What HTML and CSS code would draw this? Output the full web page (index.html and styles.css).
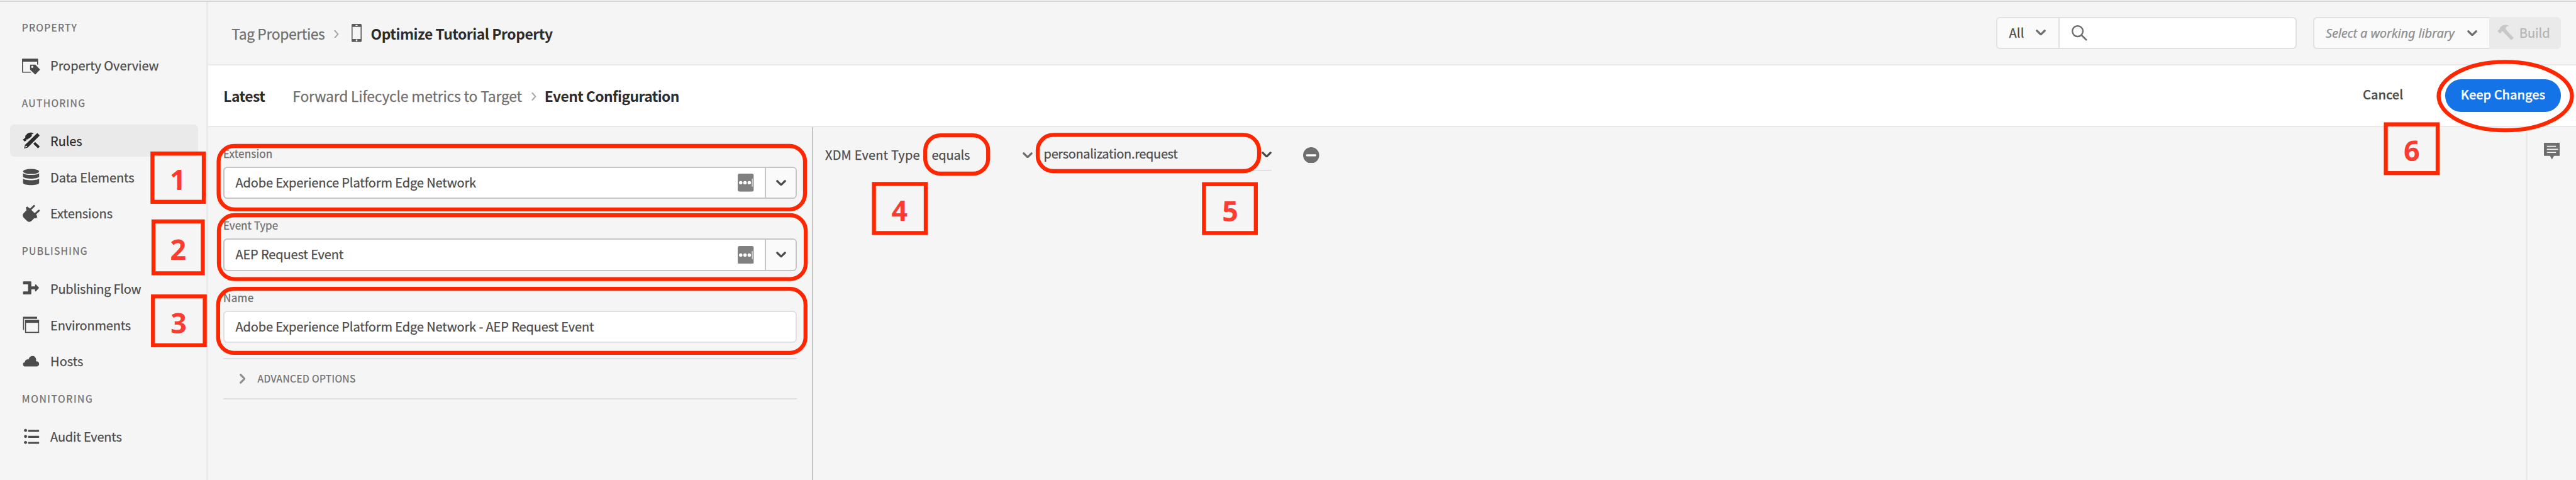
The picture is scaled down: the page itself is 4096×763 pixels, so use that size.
FILE: index.html
```html
<!DOCTYPE html>
<html lang="en">
<head>
<meta charset="utf-8">
<title>Event Configuration</title>
<link rel="stylesheet" href="styles.css">
</head>
<body>
<svg class="defs" aria-hidden="true">
  <symbol id="chev-down" viewBox="0 0 20 12"><path d="M2.2 2.2 10 9.8 17.8 2.2" fill="none" stroke="currentColor" stroke-width="4" stroke-linecap="round" stroke-linejoin="round"/></symbol>
  <symbol id="chev-right" viewBox="0 0 12 20"><path d="M2.2 2.2 9.8 10 2.2 17.8" fill="none" stroke="currentColor" stroke-width="4" stroke-linecap="round" stroke-linejoin="round"/></symbol>
  <symbol id="crumb" viewBox="0 0 10 16"><path d="M1.8 1 8 8 1.8 15" fill="none" stroke="currentColor" stroke-width="2.6" stroke-linecap="round" stroke-linejoin="round"/></symbol>
  <symbol id="dots" viewBox="0 0 32 36"><rect width="32" height="36" rx="4" fill="#808080"/><g fill="#fff"><circle cx="6" cy="18" r="3.4"/><circle cx="14.5" cy="18" r="3.4"/><circle cx="23" cy="18" r="3.4"/><rect x="28.3" y="10" width="1.2" height="16"/></g></symbol>
</svg>

<div class="topline"></div>
<div class="app">
  <nav class="side">
    <h2 class="side-head first">PROPERTY</h2>
    <a class="item"><svg class="ico" viewBox="0 0 36 36"><path fill="currentColor" fill-rule="evenodd" d="M0 5a1 1 0 0 1 1-1h30a1 1 0 0 1 1 1v11h-2v-6H2v20h14.5l2 2H1a1 1 0 0 1-1-1Z"/><path fill="currentColor" fill-rule="evenodd" d="M16 17.5a1.5 1.5 0 0 1 1.500-1.500h9L36 25.700 26.400 35.800 16 26ZM20.300 18.200a2.100 2.100 0 1 0 0 4.200 2.100 2.100 0 0 0 0-4.200Z"/></svg><span>Property Overview</span></a>
    <h2 class="side-head">AUTHORING</h2>
    <a class="item on"><svg class="ico" viewBox="0 0 36 36"><path fill="currentColor" d="M1.500 16.300 5.300 20 8 18.500 9 15.700 12.300 15.500 13.300 13.500 15.500 13.200 20 8.500 18.300 6.500 23 4C20 1.600 14 1.600 10.300 4.700L6.700 8.500 6.400 12.400Z"/><path fill="currentColor" fill-rule="evenodd" d="M4.200 34 6 26.600 29.700 3.700a1 1 0 0 1 1.500 0l3.300 3.500a1 1 0 0 1 0 1.500L11.500 31.800ZM6.300 31.800 10.200 30.600 9.700 29 8 28.400 7.300 28.200Z"/><path fill="currentColor" d="m22.500 24.300 3.500-3.500 8.600 8.400a1 1 0 0 1 0 1.500l-2 2a1 1 0 0 1-1.500 0Z"/></svg><span>Rules</span></a>
    <a class="item"><svg class="ico" viewBox="0 0 36 36"><g fill="currentColor"><ellipse cx="18" cy="7" rx="16" ry="5"/><path d="M2 10.200c4 4.800 28 4.800 32 0v7.300c-3 5-29 5-32 0Z"/><path d="M2 20.900c4 4.600 28 4.600 32 0V30c-2.500 5.300-29.500 5.300-32 0Z"/></g></svg><span>Data Elements</span></a>
    <a class="item"><svg class="ico" viewBox="0 0 36 36"><path fill="currentColor" d="M7.600 6.300 10.200 4l5 3.400L28.800 21l1.600 4-2.600 2.600-3.300-.4L18 33.500q-3.600 2.400-7.200 0L3 26Q0 22 2.500 18L9 11.500Z"/><path d="M17 9.700 24 2.800M26.500 18.500l7-6.300" fill="none" stroke="currentColor" stroke-width="3.800" stroke-linecap="round"/></svg><span class="t1">Extensions</span></a>
    <h2 class="side-head">PUBLISHING</h2>
    <a class="item"><svg class="ico" viewBox="0 0 36 36"><path fill="currentColor" d="M3 4h14a1.500 1.500 0 0 1 1.500 1.500V14H26V10.700q.8-1.200 1.800-.5L34 17 27.800 23.800q-1 .7-1.800-.5V20h-7.500v8.500A1.500 1.500 0 0 1 17 30H3a1 1 0 0 1-1-1v-4a1 1 0 0 1 1-1h9V10H3A1 1 0 0 1 2 9V5a1 1 0 0 1 1-1Z"/></svg><span class="t3">Publishing Flow</span></a>
    <a class="item"><svg class="ico" viewBox="0 0 36 36"><path fill="currentColor" fill-rule="evenodd" d="M2 2h28v4H4v22H2ZM6 8h28v26H6ZM8 14v18h24V14Z"/></svg><span class="t2">Environments</span></a>
    <a class="item"><svg class="ico" viewBox="0 0 36 36"><path fill="currentColor" d="M6 28a4 4 0 0 1-.2-8C5.500 16 9 13 13 14.200 15 5 27 4.500 28 14.500c0 1.200-.2 2.300-.4 3.500C31 17.300 34 20 34 23c0 3-2.500 5-5.500 5Z"/></svg><span class="t0">Hosts</span></a>
    <h2 class="side-head wide">MONITORING</h2>
    <a class="item"><svg class="ico" viewBox="0 0 36 36"><g fill="currentColor"><circle cx="7" cy="5.200" r="3"/><circle cx="7" cy="17.200" r="3"/><circle cx="7" cy="29.200" r="3"/><rect x="12" y="4" width="22" height="4" rx="1"/><rect x="12" y="16" width="22" height="4" rx="1"/><rect x="12" y="28" width="22" height="4" rx="1"/></g></svg><span class="t2">Audit Events</span></a>
  </nav>

  <main class="main">
    <header class="bar">
      <span class="crumb tag">Tag Properties</span>
      <svg class="sep"><use href="#crumb"/></svg>
      <svg class="phone" viewBox="0 0 20 36"><path fill="#5c5c5c" fill-rule="evenodd" d="M2 0h16a2 2 0 0 1 2 2v32a2 2 0 0 1-2 2H2a2 2 0 0 1-2-2V2a2 2 0 0 1 2-2ZM2 6v24h16V6ZM8 2.200v1.600h4V2.200ZM8.500 31v3.500h3V31Z"/></svg>
      <strong class="title">Optimize Tutorial Property</strong>
      <div class="search">
        <div class="search-type"><span>All</span><svg class="cd"><use href="#chev-down"/></svg></div>
        <svg class="lens" viewBox="0 0 31 31"><circle cx="12" cy="12" r="10.500" fill="none" stroke="#6e6e6e" stroke-width="3"/><path d="m19.500 19.500 9.500 9.500" stroke="#6e6e6e" stroke-width="3.400" stroke-linecap="round"/></svg>
      </div>
      <div class="library"><i>Select a working library</i><svg class="cd"><use href="#chev-down"/></svg></div>
      <div class="build"><svg class="hammer" viewBox="0 0 32 32"><path fill="#c8c8c8" d="M.2 13.200 4.200 9.700 5 7C8 2 13-1.500 22 2.300L22.500 3.500C19.500 3 17.500 4 17 6.500L16.500 9.500 31.500 25.500a1.500 1.500 0 0 1 0 2l-2.700 2.800a1.500 1.500 0 0 1-2 0L11 13.800 8 13.500 8 15.200 5 17.800Z"/></svg><span>Build</span></div>
    </header>

    <header class="bar sub">
      <strong class="latest">Latest</strong>
      <span class="crumb rule">Forward Lifecycle metrics to Target</span>
      <svg class="sep"><use href="#crumb"/></svg>
      <strong class="here">Event Configuration</strong>
      <span class="cancel">Cancel</span>
      <span class="keep">Keep Changes</span>
    </header>

    <div class="body">
      <section class="form">
        <div class="field"><label>Extension</label>
          <div class="input combo"><span>Adobe Experience Platform Edge Network</span><svg class="dots"><use href="#dots"/></svg><div class="drop"><svg class="cd"><use href="#chev-down"/></svg></div></div></div>
        <div class="field"><label class="t0">Event Type</label>
          <div class="input combo"><span>AEP Request Event</span><svg class="dots"><use href="#dots"/></svg><div class="drop"><svg class="cd"><use href="#chev-down"/></svg></div></div></div>
        <div class="field"><label class="nm">Name</label>
          <div class="input"><span>Adobe Experience Platform Edge Network - AEP Request Event</span></div></div>
        <div class="advanced"><svg class="cr"><use href="#chev-right"/></svg><span>ADVANCED OPTIONS</span></div>
      </section>
      <section class="config">
        <div class="cond">
          <span class="xdm">XDM Event Type</span>
          <span class="op">equals</span>
          <svg class="cd"><use href="#chev-down"/></svg>
          <div class="value"><span>personalization.request</span><svg class="cd"><use href="#chev-down"/></svg></div>
          <svg class="minus" viewBox="0 0 32 32"><circle cx="16" cy="16" r="16" fill="#6e6e6e"/><rect x="6" y="14" width="20" height="4" rx="1" fill="#fff"/></svg>
        </div>
      </section>
      <aside class="rail"><svg class="note" viewBox="0 0 32 33"><path fill="#6e6e6e" d="M1 0h30a1 1 0 0 1 1 1v24a1 1 0 0 1-1 1H20l-4 7-4-7H1a1 1 0 0 1-1-1V1a1 1 0 0 1 1-1Z"/><path d="M6 7h18M6 13h22M6 19h18" stroke="#f5f5f5" stroke-width="2"/></svg></aside>
    </div>
  </main>
</div>

<svg class="marks" viewBox="0 0 5120 954">
  <g fill="none" stroke="#ff2600" stroke-width="7.900">
    <rect x="434.500" y="290" width="1165.500" height="126" rx="31"/>
    <rect x="435" y="427.500" width="1166.500" height="127" rx="31"/>
    <rect x="433.500" y="574" width="1167.500" height="127" rx="31"/>
    <rect x="1839" y="269" width="125" height="76" rx="30"/>
    <rect x="2062.500" y="268" width="440" height="72" rx="31"/>
    <ellipse cx="4979.500" cy="191" rx="132.500" ry="68"/>
    <rect x="303" y="305" width="102" height="96"/>
    <rect x="305" y="440" width="98" height="103"/>
    <rect x="304" y="589" width="103" height="97"/>
    <rect x="1737" y="365.500" width="103" height="97.500"/>
    <rect x="2393" y="366" width="103" height="97"/>
    <rect x="4742" y="247" width="103" height="97"/>
  </g>
  <g class="num">
    <text x="353.500" y="378">1</text><text x="354" y="516">2</text><text x="355" y="662">3</text>
    <text x="1788" y="438.500">4</text><text x="2445" y="439.500">5</text><text x="4793.500" y="320">6</text>
  </g>
</svg>
</body>
</html>
```
FILE: styles.css
```css
* { box-sizing: border-box; }
html, body { margin: 0; height: 100%; overflow: hidden; }
body {
  background: #f5f5f5;
  color: #4b4b4b;
  font: 20px/28px "Noto Sans CJK SC", "Noto Sans", sans-serif;
  -webkit-text-stroke: .25px currentColor;
  white-space: nowrap;
  display: flex;
  flex-direction: column;
}
svg { display: block; flex: none; }
span, i, strong, label { flex: none; }
.defs { position: absolute; width: 0; height: 0; }
.topline { flex: none; height: 3px; border-bottom: 2px solid #d3d3d3; }
.app { flex: 1; display: flex; min-height: 0; }

/* Navigation */
.side { flex: none; width: 331px; border-right: 3px solid #eaeaea; padding-top: 28.4px; }
.side-head {
  margin: 21.7px 0 23px; padding: 2px 0 0 34.8px;
  font-size: 15.7px; line-height: 22px; height: 24px; font-weight: 400;
  letter-spacing: 1.3px; color: #6e6e6e;
}
.side-head.first { margin-top: 0; }
.side-head.wide { letter-spacing: 1.6px; }
.item {
  display: flex; align-items: center;
  height: 51.2px; margin: 0 13px 6.4px 16px; padding-left: 19.2px;
  border-radius: 6.4px; letter-spacing: -.08px;
}
.item:has(+ .side-head) { margin-bottom: 0; }
.item.on { background: #eaeaea; color: #2c2c2c; }
.item span { padding-top: .6px; }
.ico { width: 28.8px; height: 28.8px; margin-right: 16.1px; }
.t0 { letter-spacing: 0; }
.t1 { letter-spacing: -.06px; }
.t2 { letter-spacing: -.2px; }
.t3 { letter-spacing: -.26px; }

/* Header bars */
.main { flex: 1; min-width: 0; display: flex; flex-direction: column; }
.bar {
  flex: none; display: flex; align-items: center;
  height: 101px; border-bottom: 2px solid #e8e8e8; padding: 0 24px 0 37.2px;
  font-size: 22.9px;
}
.bar.sub { height: 98px; background: #fff; padding-left: 24.2px; }
.bar strong { color: #2c2c2c; font-weight: 700; -webkit-text-stroke: 0; }
.crumb { color: #6e6e6e; }
.tag { letter-spacing: -.4px; }
.sep { width: 8px; height: 12.8px; margin: 3px 0 0 14.9px; color: #a8a8a8; }
.phone { width: 16px; height: 28.8px; margin-left: 20px; }
.title { margin-left: 14.2px; letter-spacing: -.48px; }
.latest { letter-spacing: -.51px; }
.rule { margin-left: 43.9px; letter-spacing: -.21px; }
.here { margin-left: 13px; letter-spacing: -.59px; }
.cd { width: 16px; height: 9.6px; color: #6e6e6e; }
.search {
  display: flex; align-items: center; overflow: hidden;
  width: 478.4px; height: 51.2px; margin-left: auto;
  border: 2px solid #e1e1e1; border-radius: 6.4px; background: #fff; font-size: 20px;
}
.search-type {
  display: flex; align-items: center; gap: 18.2px; align-self: stretch;
  width: 99.2px; padding: 0 0 1px 18.8px; background: #fafafa; border-right: 2px solid #e1e1e1;
  letter-spacing: .2px;
}
.lens { width: 24.8px; height: 24.8px; margin-left: 19.6px; }
.library {
  display: flex; align-items: center; justify-content: space-between;
  width: 280.8px; height: 51.2px; margin-left: 25.6px; padding: 0 19.2px 0 18.3px;
  border: 2px solid #e1e1e1; border-right: 0; border-radius: 6.4px 0 0 6.4px;
  background: #fafafa; color: #8e8e8e; font-size: 20px;
}
.library i { padding-top: 1px; font-family: "Noto Sans", sans-serif; letter-spacing: -.13px; }
.build {
  display: flex; align-items: center; gap: 9px;
  width: 113.6px; height: 51.2px; padding: 0 0 1px 12.800px;
  border-radius: 0 6.4px 6.4px 0; background: #eaeaea; color: #b3b3b3; font-size: 20px;
}
.hammer { width: 25.6px; height: 25.6px; }
.cancel { margin-left: auto; padding-bottom: 3.400px; font-size: 20px; font-weight: 500; }
.keep {
  width: 184px; height: 51.2px; margin-left: 66.9px;
  border-radius: 25.6px; background: #1473e6; color: #fff;
  font-size: 20px; font-weight: 500; line-height: 47.8px; text-align: center;
}

/* Event form */
.body { flex: 1; display: flex; min-height: 0; }
.form { flex: none; width: 962px; padding: 29.7px 24px 0; border-right: 2px solid #c6c6c6; }
.field { margin-bottom: 30.1px; }
.field label { display: block; height: 24px; font-size: 17.1px; line-height: 24.600px; letter-spacing: .13px; color: #6e6e6e; }
.field .t0 { letter-spacing: -.04px; }
.field .nm { letter-spacing: .3px; }
.input {
  display: flex; align-items: center; overflow: hidden;
  height: 51.2px; margin-top: 9.2px; padding-left: 17.4px;
  border: 2px solid #e1e1e1; border-radius: 6.4px; background: #fff; letter-spacing: -.12px;
}
.input.combo { border-color: #c6c6c6; }
.input span { padding-bottom: 1.600px; }
.dots { width: 25.6px; height: 28.8px; margin: 0 17px 0 auto; }
.drop {
  display: flex; align-items: center; justify-content: center; align-self: stretch;
  width: 49px; border-left: 2px solid #c6c6c6; background: #fafafa;
}
.drop .cd, .value .cd { color: #4b4b4b; }
.advanced {
  display: flex; align-items: center;
  height: 65.6px; margin-top: -6px; padding-left: 25.8px;
  border: solid #e1e1e1; border-width: 2px 0;
  font-size: 15.7px; letter-spacing: .33px; color: #6e6e6e;
}
.advanced span { padding-bottom: .6px; }
.cr { width: 9.6px; height: 16px; margin-right: 19.2px; color: #8e8e8e; }

/* Condition */
.config { flex: 1; min-width: 0; padding: 18.8px 0 0 19px; }
.cond { display: flex; align-items: center; height: 51.2px; }
.xdm { padding-bottom: .6px; letter-spacing: .18px; }
.op { width: 144.2px; margin-left: 18.6px; padding-bottom: .6px; letter-spacing: -.2px; }
.value {
  display: flex; align-items: center; justify-content: space-between;
  width: 362.8px; height: 51.2px; margin-left: 18px;
  border-bottom: 2px solid #e1e1e1; letter-spacing: -.35px;
}
.value span { padding-bottom: 2px; }
.minus { width: 25.6px; height: 25.6px; margin-left: 49.6px; }

.rail { flex: none; width: 80px; border-left: 3px solid #eaeaea; padding: 25.2px 0 0 25.8px; }
.note { width: 25.6px; height: 26.4px; }

/* Step callouts drawn over the page */
.marks { position: absolute; left: 0; top: 0; width: 4096px; height: 763.2px; }
.num { font: 700 56px "Noto Sans", sans-serif; fill: #ff3b30; text-anchor: middle; -webkit-text-stroke: 0; }
```
